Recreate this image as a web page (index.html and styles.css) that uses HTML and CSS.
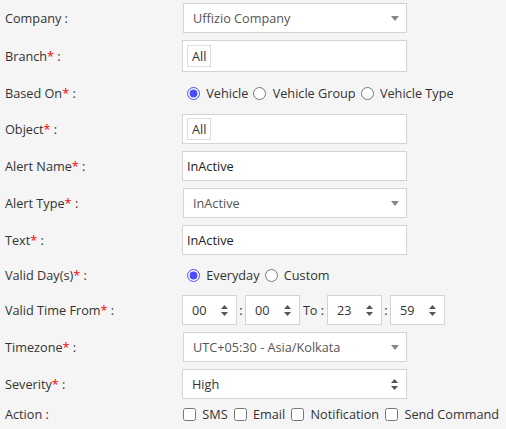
FILE: index.html
```html
<!DOCTYPE html>
<html lang="en">
<head>
    <meta charset="UTF-8">
    <title>Alert Settings</title>
    <link rel="stylesheet" href="styles.css">
</head>
<body>
    <form class="alert-form">
        <div class="af-row">
            <label class="af-label">Company :</label>
            <div class="af-select">
                <select><option>Uffizio Company</option></select>
                <span class="af-caret"></span>
            </div>
        </div>

        <div class="af-row tall">
            <label class="af-label">Branch<span class="req">*</span> :</label>
            <div class="af-tags tall"><span class="af-tag">All</span></div>
        </div>

        <div class="af-row radio-row">
            <label class="af-label">Based On<span class="req">*</span> :</label>
            <div class="af-options">
                <label><input type="radio" name="based" checked> Vehicle</label>
                <label><input type="radio" name="based"> Vehicle Group</label>
                <label><input type="radio" name="based"> Vehicle Type</label>
            </div>
        </div>

        <div class="af-row">
            <label class="af-label">Object<span class="req">*</span> :</label>
            <div class="af-tags"><span class="af-tag">All</span></div>
        </div>

        <div class="af-row">
            <label class="af-label">Alert Name<span class="req">*</span> :</label>
            <input class="af-input" type="text" value="InActive">
        </div>

        <div class="af-row">
            <label class="af-label">Alert Type<span class="req">*</span> :</label>
            <div class="af-select">
                <select><option>InActive</option></select>
                <span class="af-caret"></span>
            </div>
        </div>

        <div class="af-row">
            <label class="af-label">Text<span class="req">*</span> :</label>
            <input class="af-input" type="text" value="InActive">
        </div>

        <div class="af-row radio-row short">
            <label class="af-label">Valid Day(s)<span class="req">*</span> :</label>
            <div class="af-options">
                <label><input type="radio" name="days" checked> Everyday</label>
                <label><input type="radio" name="days"> Custom</label>
            </div>
        </div>

        <div class="af-row">
            <label class="af-label">Valid Time From<span class="req">*</span> :</label>
            <div class="af-time">
                <div class="af-spin"><span>00</span><svg viewBox="0 0 7 11"><path d="M3.5 0 7 4H0z M3.5 11 0 7h7z"/></svg></div>
                <span class="sep">:</span>
                <div class="af-spin"><span>00</span><svg viewBox="0 0 7 11"><path d="M3.5 0 7 4H0z M3.5 11 0 7h7z"/></svg></div>
                <span class="sep to">To :</span>
                <div class="af-spin"><span>23</span><svg viewBox="0 0 7 11"><path d="M3.5 0 7 4H0z M3.5 11 0 7h7z"/></svg></div>
                <span class="sep">:</span>
                <div class="af-spin"><span>59</span><svg viewBox="0 0 7 11"><path d="M3.5 0 7 4H0z M3.5 11 0 7h7z"/></svg></div>
            </div>
        </div>

        <div class="af-row">
            <label class="af-label">Timezone<span class="req">*</span> :</label>
            <div class="af-select">
                <select><option>UTC+05:30 - Asia/Kolkata</option></select>
                <span class="af-caret"></span>
            </div>
        </div>

        <div class="af-row">
            <label class="af-label">Severity<span class="req">*</span> :</label>
            <div class="af-spin wide"><span>High</span><svg viewBox="0 0 7 11"><path d="M3.5 0 7 4H0z M3.5 11 0 7h7z"/></svg></div>
        </div>

        <div class="af-row check-row">
            <label class="af-label">Action :</label>
            <div class="af-options checks">
                <label><input type="checkbox"> SMS</label>
                <label><input type="checkbox"> Email</label>
                <label><input type="checkbox"> Notification</label>
                <label><input type="checkbox"> Send Command</label>
            </div>
        </div>
    </form>
</body>
</html>
```

FILE: styles.css
```css
body {
    margin: 0;
    background-color: #f5f5f5;
    font-family: "Open Sans", Arial, sans-serif;
    font-size: 12.7px;
    color: #333;
}

.alert-form {
    padding-top: 3px;
}

.af-row {
    display: flex;
    align-items: center;
    height: 30px;
    margin-bottom: 7px;
}

.af-row.tall {
    height: 32px;
}

.af-row.radio-row {
    height: 28px;
}

.af-row.radio-row.short {
    height: 26px;
}

.af-row.check-row {
    height: 16px;
}

.af-label {
    width: 177px;
    padding-left: 5px;
    flex-shrink: 0;
}

.req {
    color: #f00;
}

/* select boxes */
.af-select {
    position: relative;
    width: 224px;
    height: 30px;
    margin-left: 1px;
}

.af-select select {
    -webkit-appearance: none;
    appearance: none;
    width: 100%;
    height: 100%;
    padding: 0 9px;
    border: 1px solid #d4d4d4;
    border-radius: 0;
    background-color: #fff;
    font-family: inherit;
    font-size: 12.7px;
    color: #555;
    outline: none;
}

.af-caret {
    position: absolute;
    right: 8px;
    top: 13px;
    width: 0;
    height: 0;
    border-left: 4px solid transparent;
    border-right: 4px solid transparent;
    border-top: 5px solid #888;
    pointer-events: none;
}

/* tag boxes */
.af-tags {
    box-sizing: border-box;
    width: 225px;
    height: 30px;
    padding: 3px 4px;
    border: 1px solid #d4d4d4;
    background-color: #fff;
    display: flex;
    align-items: center;
}

.af-tags.tall {
    height: 32px;
}

.af-tag {
    box-sizing: border-box;
    height: 22px;
    padding: 0 4px;
    border: 1px solid #ddd;
    display: flex;
    align-items: center;
    color: #333;
}

/* text inputs */
.af-input {
    box-sizing: border-box;
    width: 225px;
    height: 30px;
    padding: 0 4px;
    border: 1px solid #d4d4d4;
    border-radius: 0;
    background-color: #fff;
    font-family: inherit;
    font-size: 12.7px;
    color: #222;
    outline: none;
}

/* radio and checkbox groups */
.af-options {
    display: flex;
    align-items: center;
}

.af-options label {
    display: flex;
    align-items: center;
    white-space: pre;
}

.af-options input[type="radio"] {
    width: 13px;
    height: 13px;
    margin: 0 3px 0 5px;
    accent-color: #4a4aff;
}

.af-options.checks {
    gap: 5px;
}

.af-options input[type="checkbox"] {
    width: 13px;
    height: 13px;
    margin: 0 3px 0 1px;
}

/* time spinners */
.af-time {
    display: flex;
    align-items: center;
}

.af-time .sep {
    width: 8px;
    text-align: center;
}

.af-time .sep.to {
    width: 27px;
}

.af-spin {
    box-sizing: border-box;
    width: 55px;
    height: 30px;
    padding: 0 8px 0 9px;
    border: 1px solid #d4d4d4;
    background-color: #fff;
    display: flex;
    align-items: center;
    justify-content: space-between;
    color: #333;
}

.af-spin.wide {
    width: 225px;
}

.af-spin svg {
    width: 7px;
    height: 11px;
    fill: #555;
}
```
